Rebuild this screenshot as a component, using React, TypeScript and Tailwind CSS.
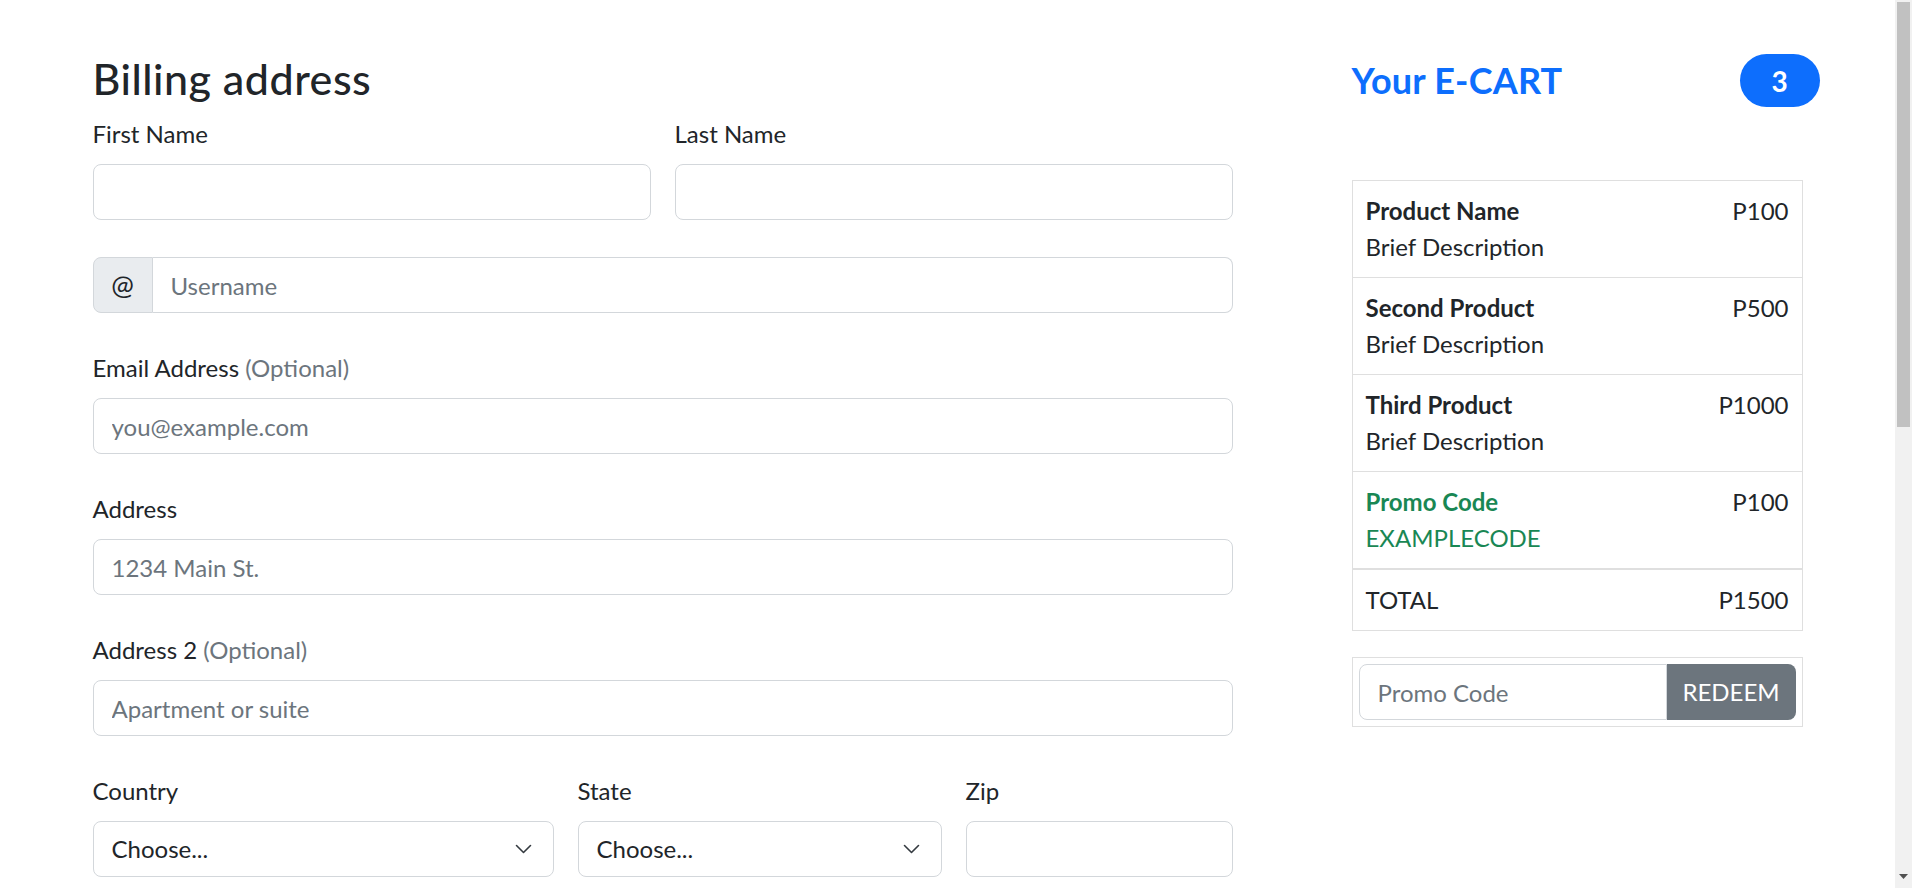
const font = { fontFamily: "Lato, 'Liberation Sans', sans-serif" }

const inputCls =
  "block w-full h-[56px] rounded-[8px] border border-[#d3d7db] bg-white px-[18px] text-[24px] text-[#212529] outline-none placeholder:text-[#6c757d]"

const Label = ({ children, optional }: { children: string; optional?: boolean }) => (
  <label className="mb-3 block text-[24px] leading-[36px]">
    {children}
    {optional && <span className="text-[#6c757d]"> (Optional)</span>}
  </label>
)

const Select = () => (
  <div className="relative">
    <select className={`${inputCls} appearance-none`} defaultValue="">
      <option value="">Choose...</option>
    </select>
    {/* chevron */}
    <svg
      width="17"
      height="10"
      viewBox="0 0 17 10"
      className="pointer-events-none absolute right-[22px] top-1/2 -translate-y-1/2"
    >
      <path d="M1.5 1.5l7 7 7-7" fill="none" stroke="#343a40" strokeWidth="1.6" strokeLinecap="round" strokeLinejoin="round" />
    </svg>
  </div>
)

const items = [
  { name: "Product Name", desc: "Brief Description", price: "P100" },
  { name: "Second Product", desc: "Brief Description", price: "P500" },
  { name: "Third Product", desc: "Brief Description", price: "P1000" },
]

export default function App() {
  return (
    <div className="flex h-screen overflow-hidden bg-white text-[#212529]" style={font}>
      {/* Page */}
      <div className="min-w-0 flex-1">
        <div className="mx-auto flex w-[1710px] pt-[54px]">

          {/* Billing form */}
          <form className="w-[1140px]">
            <h3 className="mb-3 text-[43px] font-medium leading-[50px] tracking-[0.5px]">Billing address</h3>

            <div className="grid grid-cols-12 gap-x-6 gap-y-[37px]">
              <div className="col-span-6">
                <Label>First Name</Label>
                <input className={inputCls} />
              </div>
              <div className="col-span-6">
                <Label>Last Name</Label>
                <input className={inputCls} />
              </div>

              <div className="col-span-12 flex h-[56px]">
                <span className="flex w-[60px] items-center justify-center rounded-l-[8px] border border-[#d3d7db] bg-[#e9ecef] text-[27px]">
                  @
                </span>
                <input
                  className="h-full flex-1 rounded-r-[8px] border border-l-0 border-[#d3d7db] px-[18px] text-[24px] outline-none placeholder:text-[#6c757d]"
                  placeholder="Username"
                />
              </div>

              <div className="col-span-12">
                <Label optional>Email Address</Label>
                <input className={inputCls} placeholder="you@example.com" />
              </div>

              <div className="col-span-12">
                <Label>Address</Label>
                <input className={inputCls} placeholder="1234 Main St." />
              </div>

              <div className="col-span-12">
                <Label optional>Address 2</Label>
                <input className={inputCls} placeholder="Apartment or suite" />
              </div>

              <div className="col-span-5">
                <Label>Country</Label>
                <Select />
              </div>
              <div className="col-span-4">
                <Label>State</Label>
                <Select />
              </div>
              <div className="col-span-3">
                <Label>Zip</Label>
                <input className={inputCls} />
              </div>
            </div>
          </form>

          {/* Cart */}
          <aside className="ml-auto w-[451px]">
            <div className="flex h-[53px] w-[468px] items-center justify-between">
              <span className="text-[36px] font-bold leading-[43px] tracking-[0.2px] text-[#0d6efd]">Your E-CART</span>
              <span className="flex h-[53px] w-[80px] items-center justify-center rounded-full bg-[#0d6efd] text-[28px] font-bold text-white">
                3
              </span>
            </div>

            <ul className="mt-[73px] border border-[#dfdfdf] text-[24px] leading-[36px]">
              {items.map((it) => (
                <li key={it.name} className="flex justify-between border-b border-[#dfdfdf] px-[13px] py-3">
                  <div>
                    <div className="font-bold">{it.name}</div>
                    <div>{it.desc}</div>
                  </div>
                  <span>{it.price}</span>
                </li>
              ))}
              <li className="flex justify-between border-b-2 border-[#dfdfdf] px-[13px] py-3">
                <div className="text-[#198754]">
                  <div className="font-bold">Promo Code</div>
                  <div>EXAMPLECODE</div>
                </div>
                <span>P100</span>
              </li>
              <li className="flex justify-between px-[13px] py-3">
                <span>TOTAL</span>
                <span>P1500</span>
              </li>
            </ul>

            <div className="mt-[26px] flex border border-[#dfdfdf] p-[6px]">
              <input
                className="h-[56px] min-w-0 flex-1 rounded-l-[8px] border border-[#d3d7db] px-[18px] text-[24px] outline-none placeholder:text-[#6c757d]"
                placeholder="Promo Code"
              />
              <button className="h-[56px] w-[129px] rounded-r-[8px] bg-[#6c757d] text-[24px] text-white">
                REDEEM
              </button>
            </div>
          </aside>
        </div>
      </div>

      {/* Scrollbar */}
      <div className="flex h-screen w-[17px] flex-col bg-[#f1f1f1]">
        <div className="mx-[2px] mt-[2px] h-[425px] bg-[#c1c1c1]" />
        <div className="flex-1" />
        <div className="flex h-[14px] items-start justify-center">
          <svg width="9" height="5" viewBox="0 0 9 5">
            <path d="M0 0h9L4.5 5z" fill="#505050" />
          </svg>
        </div>
      </div>
    </div>
  )
}
